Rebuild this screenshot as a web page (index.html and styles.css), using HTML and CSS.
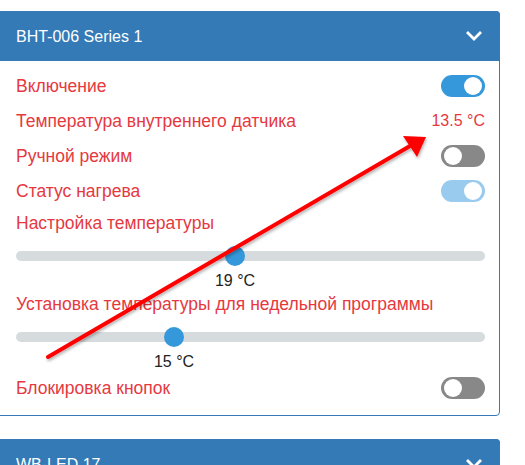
FILE: index.html
```html
<!DOCTYPE html>
<html lang="ru">
<head>
<meta charset="utf-8">
<title>Devices</title>
<link rel="stylesheet" href="styles.css">
</head>
<body>
<div class="panel">
  <div class="panel-heading">
    <span class="panel-title">BHT-006 Series 1</span>
    <svg class="chevron" width="16" height="10" viewBox="0 0 16 10"><path d="M2 2 L8 8 L14 2" fill="none" stroke="#fff" stroke-width="2.8" stroke-linecap="square"/></svg>
  </div>
  <div class="panel-body">
    <div class="row">
      <span class="label">Включение</span>
      <span class="toggle on"><span class="knob"></span></span>
    </div>
    <div class="row">
      <span class="label">Температура внутреннего датчика</span>
      <span class="value">13.5 °C</span>
    </div>
    <div class="row">
      <span class="label">Ручной режим</span>
      <span class="toggle off"><span class="knob"></span></span>
    </div>
    <div class="row">
      <span class="label">Статус нагрева</span>
      <span class="toggle on disabled"><span class="knob"></span></span>
    </div>
    <div class="label-row"><span class="label">Настройка температуры</span></div>
    <div class="slider">
      <div class="track"><span class="thumb" style="left: 46.7%"></span></div>
      <div class="slider-value"><span class="slider-text" style="left: 46.7%">19 °C</span></div>
    </div>
    <div class="label-row"><span class="label">Установка температуры для недельной программы</span></div>
    <div class="slider">
      <div class="track"><span class="thumb" style="left: 33.7%"></span></div>
      <div class="slider-value"><span class="slider-text" style="left: 33.7%">15 °C</span></div>
    </div>
    <div class="row">
      <span class="label">Блокировка кнопок</span>
      <span class="toggle off"><span class="knob"></span></span>
    </div>
  </div>
</div>
<div class="panel">
  <div class="panel-heading">
    <span class="panel-title">WB-LED 17</span>
    <svg class="chevron" width="16" height="10" viewBox="0 0 16 10"><path d="M2 2 L8 8 L14 2" fill="none" stroke="#fff" stroke-width="2.8" stroke-linecap="square"/></svg>
  </div>
</div>
<svg class="annotation" width="525" height="465" viewBox="0 0 525 465">
  <defs>
    <filter id="sh" x="-10%" y="-10%" width="120%" height="130%">
      <feDropShadow dx="1" dy="2" stdDeviation="1.5" flood-color="#000" flood-opacity="0.3"/>
    </filter>
  </defs>
  <g filter="url(#sh)" fill="#ff0000" stroke="none">
    <path d="M48 357 L410 146" stroke="#ff0000" stroke-width="4" stroke-linecap="round"/>
    <polygon points="426,137 403,136 417,157"/>
  </g>
</svg>
</body>
</html>
```

FILE: styles.css
```css
* { box-sizing: border-box; }

html, body {
  margin: 0;
  padding: 0;
  background: #fff;
  overflow: hidden;
}

body {
  padding-top: 11px;
  font-family: "Liberation Sans", Arial, sans-serif;
  font-size: 16px;
  color: #222;
  position: relative;
  width: 525px;
  height: 465px;
}

.panel {
  margin-left: -4px;
  width: 504px;
  margin-bottom: 23px;
  border: 1px solid #337ab7;
  border-radius: 4px;
  background: #fff;
}

.panel-heading {
  background: #337ab7;
  color: #fff;
  height: 50px;
  margin: -1px -1px 0 -1px;
  border-radius: 4px 4px 0 0;
  padding: 0 18px 0 20px;
  display: flex;
  align-items: center;
  justify-content: space-between;
}

.panel-title {
  font-size: 16px;
  line-height: 20px;
  padding-top: 1px;
}

.chevron {
  display: block;
  margin-top: -1px;
}

.panel-body {
  padding: 7px 14px 10px 19px;
  display: flex;
  flex-direction: column;
}

.row {
  height: 35px;
  display: flex;
  align-items: center;
  justify-content: space-between;
}

.label-row {
  height: 30px;
  display: flex;
  align-items: center;
}

.label {
  color: #e5393f;
  font-size: 17.5px;
  line-height: 20px;
}

.value {
  color: #e5393f;
  line-height: 20px;
}

.toggle {
  width: 44px;
  height: 22px;
  border-radius: 11px;
  position: relative;
  display: block;
}

.toggle.on { background: #3498db; }
.toggle.off { background: #888888; }
.toggle.disabled { background: #99cbee; }

.knob {
  position: absolute;
  top: 2px;
  width: 18px;
  height: 18px;
  border-radius: 50%;
  background: #fff;
}

.toggle.on .knob { right: 3px; }
.toggle.off .knob { left: 3px; }

.slider {
  padding-top: 8px;
}

.track {
  position: relative;
  height: 20px;
}

.track::before {
  content: "";
  position: absolute;
  left: 0;
  right: 0;
  top: 5px;
  height: 10px;
  border-radius: 5px;
  background: #d6dbde;
}

.thumb {
  position: absolute;
  top: 0;
  width: 20px;
  height: 20px;
  margin-left: -10px;
  border-radius: 50%;
  background: #3498db;
}

.slider-value {
  position: relative;
  height: 17px;
  margin-top: 6px;
}

.slider-text {
  position: absolute;
  top: 0;
  transform: translateX(-50%);
  white-space: nowrap;
  line-height: 18px;
  color: #222;
}

.annotation {
  position: absolute;
  left: 0;
  top: 0;
  pointer-events: none;
}
```
